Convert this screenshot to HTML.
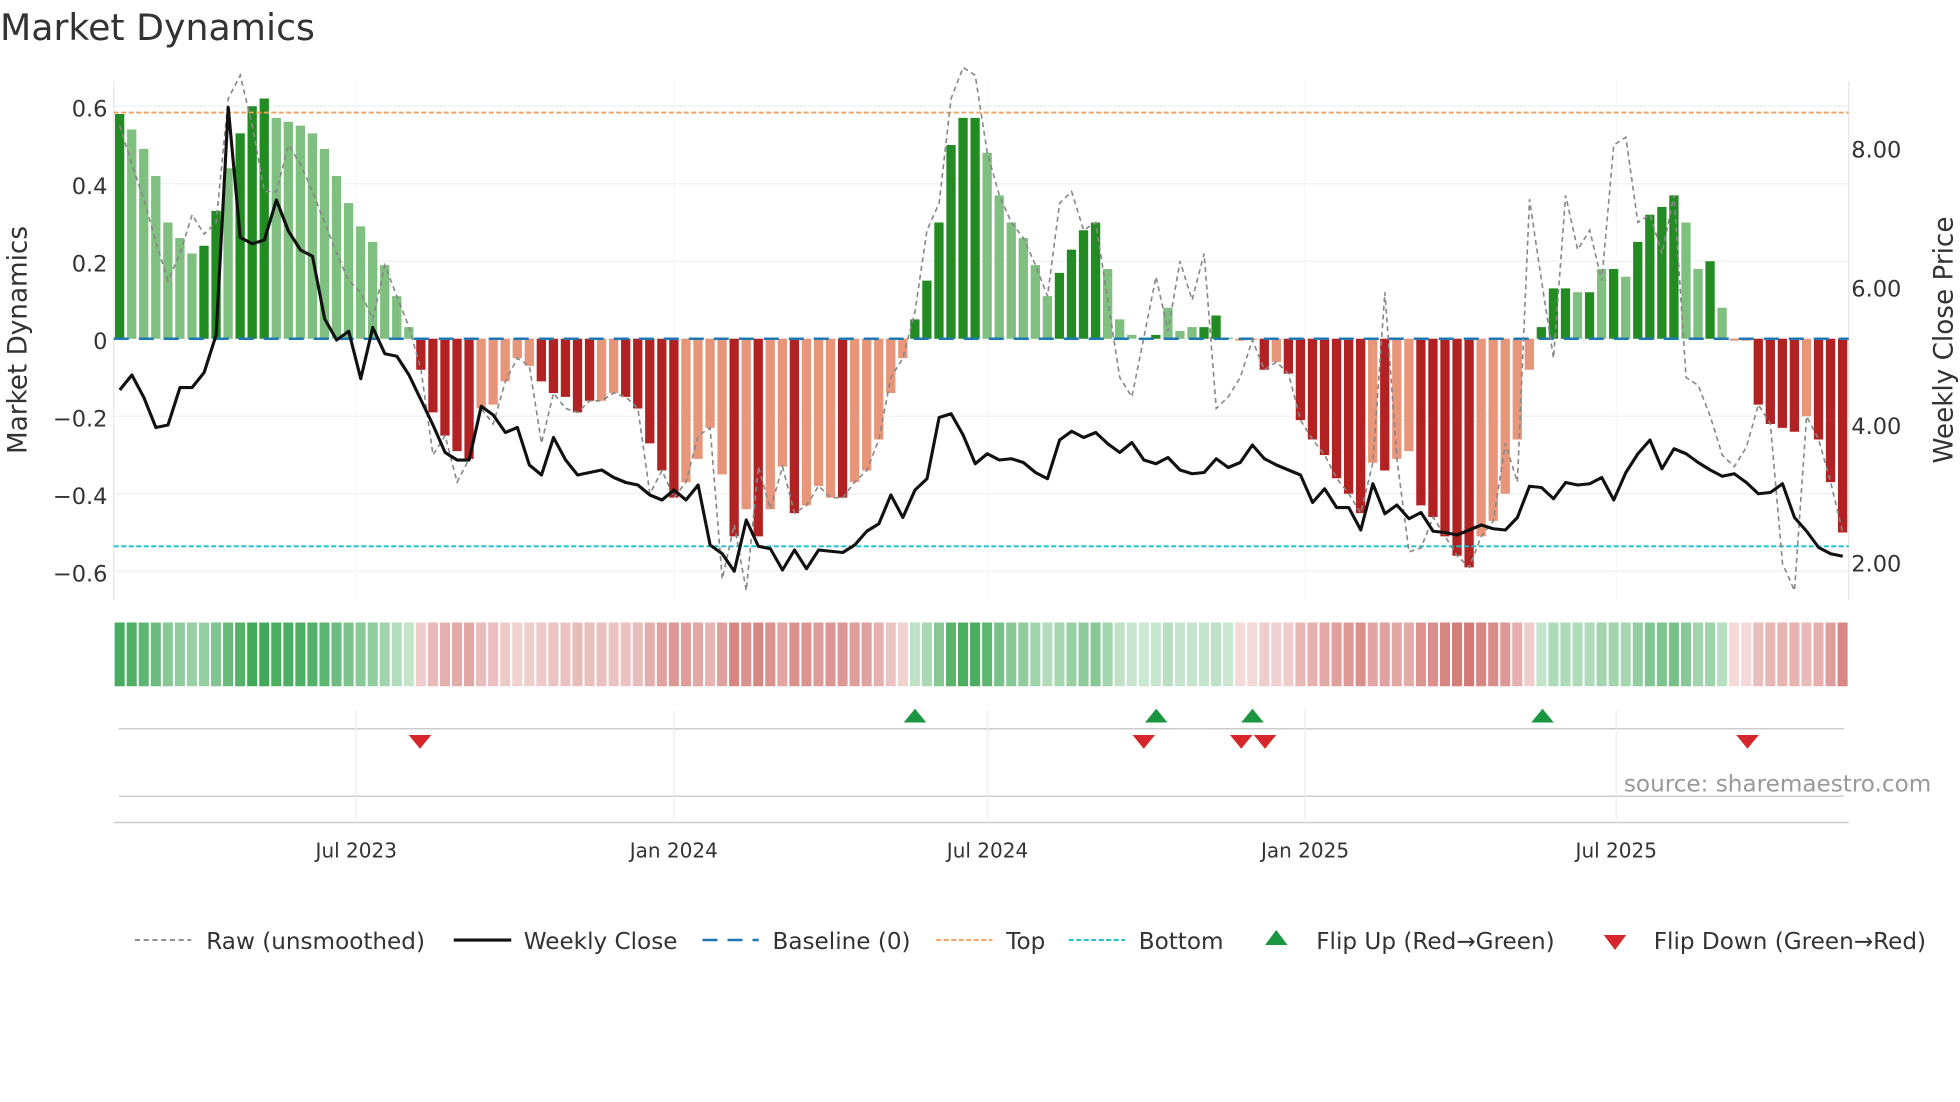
<!DOCTYPE html>
<html><head><meta charset="utf-8"><style>
html,body{margin:0;padding:0;background:#fff;}
body{width:1960px;height:1102px;overflow:hidden;}
svg{display:block;font-family:"DejaVu Sans","Liberation Sans",sans-serif;}
</style></head><body>
<svg id="s" width="1960" height="1102" viewBox="0 0 1568 881.6" xmlns="http://www.w3.org/2000/svg">
<rect width="1568" height="882" fill="#fff"/>
<text x="0" y="32" font-size="29" fill="#333">Market Dynamics</text>
<g id="grid"></g>
<g id="bars"></g>
<g id="lines"></g>
<g font-size="18" fill="#333" text-anchor="end">
<text x="86" y="93">0.6</text><text x="86" y="155">0.4</text><text x="86" y="217">0.2</text><text x="86" y="279">0</text>
<text x="86" y="341">−0.2</text><text x="86" y="403">−0.4</text><text x="86" y="465">−0.6</text>
</g>
<g font-size="18" fill="#333">
<text x="1481" y="126">8.00</text><text x="1481" y="237">6.00</text><text x="1481" y="347">4.00</text><text x="1481" y="457">2.00</text>
</g>
<text transform="translate(21,272) rotate(-90)" font-size="21" fill="#333" text-anchor="middle">Market Dynamics</text>
<text transform="translate(1562,272) rotate(-90)" font-size="21" fill="#333" text-anchor="middle">Weekly Close Price</text>
<g id="strip"></g>
<line x1="95" y1="583" x2="1475" y2="583" stroke="#ccc" stroke-width="1.2"/>
<line x1="95" y1="637" x2="1475" y2="637" stroke="#ccc" stroke-width="1.2"/>
<line x1="91" y1="658" x2="1479" y2="658" stroke="#ccc" stroke-width="1.2"/>
<g stroke="#eee" stroke-width="1"><line x1="285" y1="568" x2="285" y2="658"/><line x1="539" y1="568" x2="539" y2="658"/><line x1="790" y1="568" x2="790" y2="658"/><line x1="1044" y1="568" x2="1044" y2="658"/><line x1="1293" y1="568" x2="1293" y2="658"/></g>
<g fill="#1a9641">
<polygon points="732,567 723,578 741,578"/><polygon points="925,567 916,578 934,578"/><polygon points="1002,567 993,578 1011,578"/><polygon points="1234,567 1225,578 1243,578"/>
</g>
<g fill="#d7262b">
<polygon points="336,599 327,588 345,588"/><polygon points="915,599 906,588 924,588"/><polygon points="993,599 984,588 1002,588"/><polygon points="1012,599 1003,588 1021,588"/><polygon points="1398,599 1389,588 1407,588"/>
</g>
<text x="1545" y="633" font-size="18.5" fill="#999" text-anchor="end">source: sharemaestro.com</text>
<g font-size="16" fill="#333" text-anchor="middle">
<text x="285" y="686">Jul 2023</text><text x="539" y="686">Jan 2024</text><text x="790" y="686">Jul 2024</text><text x="1044" y="686">Jan 2025</text><text x="1293" y="686">Jul 2025</text>
</g>
<g font-size="18.5" fill="#333">
<line x1="108" y1="752" x2="153" y2="752" stroke="#888" stroke-width="1.5" stroke-dasharray="4,3"/>
<text x="165" y="759">Raw (unsmoothed)</text>
<line x1="363" y1="752" x2="409" y2="752" stroke="#111" stroke-width="2.5"/>
<text x="419" y="759">Weekly Close</text>
<line x1="562" y1="752" x2="607" y2="752" stroke="#1f77b4" stroke-width="2" stroke-dasharray="12,8"/>
<text x="618" y="759">Baseline (0)</text>
<line x1="749" y1="752" x2="794" y2="752" stroke="#f0a060" stroke-width="1.5" stroke-dasharray="4,2"/>
<text x="805" y="759">Top</text>
<line x1="855" y1="752" x2="900" y2="752" stroke="#17becf" stroke-width="1.5" stroke-dasharray="4,2"/>
<text x="911" y="759">Bottom</text>
<polygon points="1021,744 1012,756 1030,756" fill="#1a9641"/>
<text x="1053" y="759">Flip Up (Red→Green)</text>
<polygon points="1292,760 1283,748 1301,748" fill="#d7262b"/>
<text x="1323" y="759">Flip Down (Green→Red)</text>
</g>
</svg>
<script>
var NS="http://www.w3.org/2000/svg";
function el(p,t,a){var e=document.createElementNS(NS,t);for(var k in a)e.setAttribute(k,a[k]);document.getElementById(p).appendChild(e);return e;}
var B=[[.58,1],[.54,0],[.49,0],[.42,0],[.30,0],[.26,0],[.22,0],[.24,1],[.33,1],[.44,0],[.53,1],[.60,1],[.62,1],[.57,0],[.56,0],[.55,0],[.53,0],[.49,0],[.42,0],[.35,0],[.29,0],[.25,0],[.19,0],[.11,0],[.03,0],
[-.08,1],[-.19,1],[-.25,1],[-.29,1],[-.31,1],[-.18,0],[-.17,0],[-.11,0],[-.05,0],[-.07,0],[-.11,1],[-.14,1],[-.15,1],[-.19,1],[-.16,1],[-.16,0],[-.14,0],[-.15,1],[-.18,1],[-.27,1],[-.34,1],[-.41,1],[-.37,0],[-.31,0],[-.23,0],[-.35,0],[-.51,1],[-.44,0],[-.51,1],[-.44,0],[-.33,0],[-.45,1],[-.43,0],[-.38,0],[-.41,0],[-.41,1],[-.37,0],[-.34,0],[-.26,0],[-.14,0],[-.05,0],
[.05,1],[.15,1],[.30,1],[.50,1],[.57,1],[.57,1],[.48,0],[.37,0],[.30,0],[.26,0],[.19,0],[.11,0],[.17,1],[.23,1],[.28,1],[.30,1],[.18,0],[.05,0],[.01,0],[.003,0],[.01,1],[.08,0],[.02,0],[.03,0],[.03,1],[.06,1],[.003,0],[-.005,0],[-.003,0],
[-.08,1],[-.06,0],[-.09,1],[-.21,1],[-.26,1],[-.30,1],[-.36,1],[-.40,1],[-.45,1],[-.32,0],[-.34,1],[-.31,0],[-.29,0],[-.43,1],[-.46,1],[-.51,1],[-.56,1],[-.59,1],[-.51,0],[-.47,0],[-.40,0],[-.26,0],[-.08,0],
[.03,1],[.13,1],[.13,1],[.12,0],[.12,1],[.18,0],[.18,1],[.16,0],[.25,1],[.32,1],[.34,1],[.37,1],[.30,0],[.18,0],[.20,1],[.08,0],
[-.005,0],[-.005,0],[-.17,1],[-.22,1],[-.23,1],[-.24,1],[-.20,0],[-.26,1],[-.37,1],[-.50,1]];
var n=B.length,x0=91,W=(1479-91)/n;
function Y(v){return 271-v*310;}
[.6,.4,.2,0,-.2,-.4,-.6].forEach(function(v){el("grid","line",{x1:91,x2:1479,y1:Y(v),y2:Y(v),stroke:"#eef0f3","stroke-width":1});});
[285,539,790,1044,1293].forEach(function(x){el("grid","line",{x1:x,x2:x,y1:65,y2:480,stroke:"#f7f7f7","stroke-width":1});});
el("grid","line",{x1:91,x2:91,y1:65,y2:480,stroke:"#e6e6e6"});
el("grid","line",{x1:1479,x2:1479,y1:65,y2:480,stroke:"#e6e6e6"});
B.forEach(function(b,i){var v=b[0],x=x0+i*W+1,w=W-2.2;var c=v>=0?(b[1]?"#228b22":"#7fbf7f"):(b[1]?"#b22222":"#e8967a");
var y=v>=0?Y(v):271,h=Math.abs(v)*310;el("bars","rect",{x:x,y:y,width:w,height:Math.max(h,.5),fill:c});
var a=Math.min(1,Math.abs(v)/0.6);var col=v>=0?"rgba(46,160,72,"+(0.25+0.65*a)+")":"rgba(200,90,85,"+(0.22+0.6*a)+")";
el("strip","rect",{x:x0+i*W+0.7,y:498,width:W-1.6,height:51,fill:col});});
el("lines","line",{x1:91,x2:1479,y1:271,y2:271,stroke:"#1f77b4","stroke-width":2,"stroke-dasharray":"12,8"});
el("lines","line",{x1:91,x2:1479,y1:90,y2:90,stroke:"#f0a060","stroke-width":1.5,"stroke-dasharray":"4,2"});
el("lines","line",{x1:91,x2:1479,y1:437,y2:437,stroke:"#17becf","stroke-width":1.5,"stroke-dasharray":"4,2"});
var R=B.map(function(b){return b[0]*1.0;});
var sp={0:.55,1:.45,2:.36,3:.25,4:.15,5:.22,6:.32,7:.27,8:.3,9:.62,10:.68,11:.55,12:.38,13:.38,14:.5,15:.45,16:.38,17:.3,18:.22,19:.15,20:.12,21:.05,26:-.3,28:-.37,31:-.22,35:-.27,37:-.18,44:-.4,48:-.25,50:-.62,51:-.48,52:-.65,53:-.33,64:-.1,66:.07,67:.28,68:.35,69:.62,70:.71,71:.68,78:.35,79:.38,82:.1,83:-.1,84:-.15,86:.16,87:.02,88:.2,89:.1,90:.22,91:-.18,92:-.15,93:-.1,105:.12,107:-.55,108:-.54,115:-.27,116:-.37,117:.36,118:.15,119:-.05,120:.37,121:.23,122:.28,123:.15,124:.5,125:.52,126:.3,128:.22,130:-.1,131:-.12,132:-.2,133:-.3,134:-.33,135:-.28,138:-.58,139:-.65};
for(var k in sp)R[k]=sp[k];
var d="";R.forEach(function(v,i){d+=(i?"L":"M")+(x0+i*W+W/2).toFixed(1)+","+Y(Math.max(-.68,Math.min(.7,v))).toFixed(1);});
el("lines","path",{d:d,fill:"none",stroke:"#888","stroke-width":1.3,"stroke-dasharray":"4,3"});
var P=[312,300,318,342,340,310,310,298,268,86,190,195,192,160,185,200,205,255,272,265,303,262,283,285,300,320,340,362,368,368,325,332,346,342,372,380,350,368,380,378,376,382,386,388,396,400,392,400,388,436,443,457,416,437,439,456,440,455,440,441,442,436,425,419,396,414,392,383,334,331,348,371,363,368,367,370,378,383,352,345,350,346,355,362,354,368,371,366,376,379,378,367,374,370,356,367,372,376,380,402,391,406,406,424,387,411,404,415,410,425,426,428,424,420,423,424,414,389,390,399,386,388,387,382,400,378,363,352,375,359,363,370,376,381,379,386,395,394,387,414,425,438,443,445];
d="";P.forEach(function(y,i){var x=x0+i*W*(n/P.length)+W/2;d+=(i?"L":"M")+x.toFixed(1)+","+y;});
el("lines","path",{d:d,fill:"none",stroke:"#111","stroke-width":2.5,"stroke-linejoin":"round"});
</script>
</body></html>
